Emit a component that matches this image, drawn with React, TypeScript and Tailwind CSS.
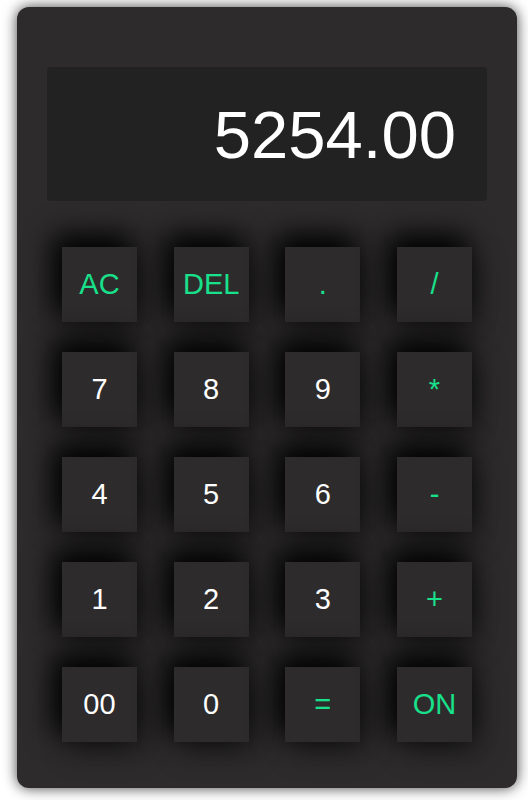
import React from "react";

const rows: { t: string; g: boolean }[][] = [
  [
    { t: "AC", g: true },
    { t: "DEL", g: true },
    { t: ".", g: true },
    { t: "/", g: true },
  ],
  [
    { t: "7", g: false },
    { t: "8", g: false },
    { t: "9", g: false },
    { t: "*", g: true },
  ],
  [
    { t: "4", g: false },
    { t: "5", g: false },
    { t: "6", g: false },
    { t: "-", g: true },
  ],
  [
    { t: "1", g: false },
    { t: "2", g: false },
    { t: "3", g: false },
    { t: "+", g: true },
  ],
  [
    { t: "00", g: false },
    { t: "0", g: false },
    { t: "=", g: true },
    { t: "ON", g: true },
  ],
];

export default function App() {
  return (
    <div className="min-h-[800px] bg-white pt-[7px] pl-[17px]" style={{ fontFamily: '"Liberation Sans", Arial, sans-serif' }}>
      <div className="w-[500px] rounded-[12px] bg-[#2d2b2c] px-[30px] pt-[60px] pb-[46px] shadow-[0_0_14px_rgba(0,0,0,0.75)]">
        <div className="flex h-[134px] items-center justify-end rounded-[4px] bg-[#222222] pr-[31px] text-[67px] leading-none text-white">
          5254.00
        </div>
        <div className="mt-[46px] flex flex-col gap-[30px] px-[15px]">
          {rows.map((r, i) => (
            <div key={i} className="flex justify-between">
              {r.map((b) => (
                <div
                  key={b.t}
                  className={`flex h-[75px] w-[75px] items-center justify-center bg-[#2d2b2c] text-[29px] shadow-[-7px_-10px_28px_2px_#000,7px_10px_28px_rgba(0,0,0,0.35)] ${
                    b.g ? "text-[#18e08b]" : "text-white"
                  }`}
                >
                  {b.t}
                </div>
              ))}
            </div>
          ))}
        </div>
      </div>
    </div>
  );
}
